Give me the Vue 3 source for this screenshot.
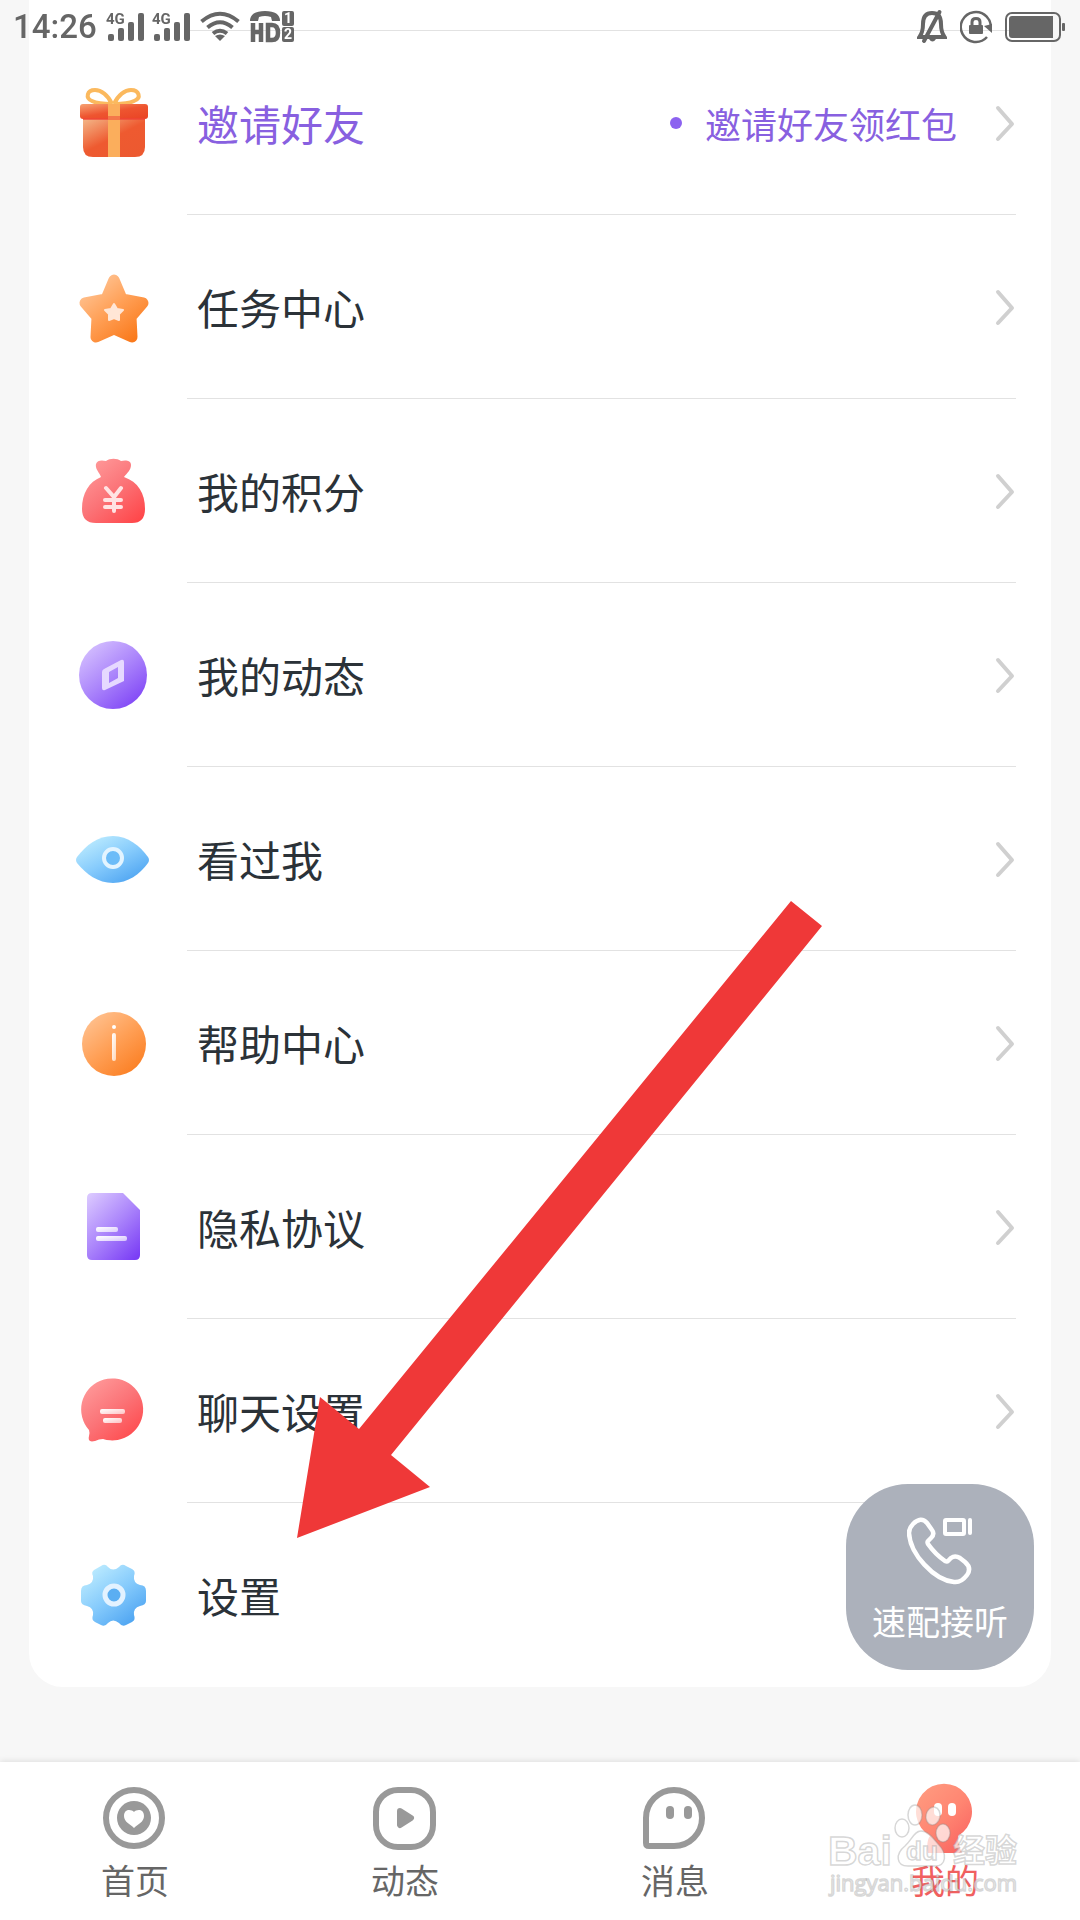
<template>
  <div class="page">
    <svg class="defs" width="0" height="0" aria-hidden="true">
      <defs>
        <linearGradient v-for="g in gradients" :id="g.id" :key="g.id" x1="0.1" y1="0" x2="0.9" y2="1">
          <stop offset="0" :stop-color="g.from" />
          <stop offset="0.5" :stop-color="g.mid" />
          <stop offset="1" :stop-color="g.to" />
        </linearGradient>
        <linearGradient id="shine" x1="0" y1="0" x2="1" y2="1">
          <stop offset="0" stop-color="#fff" />
          <stop offset="1" stop-color="#fff" stop-opacity="0.6" />
        </linearGradient>
      </defs>
    </svg>

    <header class="status">
      <div class="status-group">
        <span class="time">14:26</span>
        <svg v-for="n in 2" :key="n" class="signal" width="38" height="54" viewBox="0 0 38 54">
          <text class="net" x="0" y="24">4G</text>
          <rect x="2" y="34" width="6" height="7" rx="2" />
          <rect x="12" y="28" width="6" height="13" rx="2" />
          <rect x="22" y="22" width="6" height="19" rx="2" />
          <rect x="32" y="13" width="6" height="28" rx="2" />
        </svg>
        <svg class="wifi" width="40" height="54" viewBox="0 0 40 54">
          <g fill="none" stroke="#666" stroke-width="4">
            <path d="M1.5 21.5 Q20 6 38.5 21.5" />
            <path d="M7.5 27.5 Q20 17 32.5 27.5" />
            <path d="M13 33.5 Q20 28 27 33.5" />
          </g>
          <path d="M20 41 L15 36 Q20 33 25 36 Z" />
        </svg>
        <svg class="hd" width="44" height="54" viewBox="0 0 44 54">
          <path d="M0 21 Q0 11 15 11 Q30 11 30 21 L22 21 L21 17 Q15 15 9 17 L8 21 Z" />
          <path d="M3 23 V42 M11 23 V42 M3 32 H11" fill="none" stroke="#666" stroke-width="4.5" />
          <path d="M18 25 V40 H22 Q28 40 28 33 Q28 25 22 25 Z" fill="none" stroke="#666" stroke-width="4.5" />
          <rect x="32" y="11" width="12" height="15" rx="2" />
          <rect x="32" y="27" width="12" height="15" rx="2" />
          <text class="sim" x="38" y="23" text-anchor="middle">1</text>
          <text class="sim" x="38" y="39" text-anchor="middle">2</text>
        </svg>
      </div>
      <div class="status-group status-right">
        <svg width="30" height="54" viewBox="0 0 30 54">
          <path d="M2.5 37 Q6 32 6 24 Q6 13 15 13 Q24 13 24 24 Q24 32 27.5 37 Z" fill="none" stroke="#666" stroke-width="4" />
          <path d="M7 41 L22.500 12" stroke="#666" stroke-width="4" stroke-linecap="round" />
          <path d="M12 39 H19 Q15.5 44 12 39 Z" />
        </svg>
        <svg width="32" height="54" viewBox="0 0 32 54">
          <path d="M27 37 A15 15 0 1 1 30.5 30" fill="none" stroke="#666" stroke-width="2.5" />
          <path d="M24 26 L32 24 L32 33 Z" />
          <rect x="9" y="25" width="14" height="9" rx="1" />
          <path d="M12 26 V22 Q12 18.500 16 18.5 Q20 18.5 20 22 V26" fill="none" stroke="#666" stroke-width="3" />
        </svg>
        <svg width="60" height="54" viewBox="0 0 60 54">
          <rect x="1" y="13" width="54" height="28" rx="6" fill="none" stroke="#666" stroke-width="2" />
          <path d="M7 16 H48 V38 H7 Q4 38 4 35 V19 Q4 16 7 16 Z" />
          <rect x="57" y="23" width="3" height="8" rx="1" />
        </svg>
      </div>
    </header>

    <main class="content">
      <ul class="card">
        <li v-for="item in items" :key="item.label">
          <a class="row" href="#" :class="{ accent: item.hint }">
            <svg class="icon" width="72" height="72" viewBox="0 0 72 72" aria-hidden="true">
              <template v-if="item.icon === 'gift'">
                <g fill="none" stroke="#fbb95e" stroke-width="4">
                  <path d="M34 17 C30 8 23 3 17 3 C9 3 7 11 14 14 C20 17 28 17 34 17" />
                  <path d="M36 17 C40 8 47 3 53 3 C61 3 64 11 56 14 C50 17 42 17 36 17" />
                </g>
                <path d="M5 31 H67 V60 Q67 70 57 70 H15 Q5 70 5 60 Z" fill="url(#giftBox)" />
                <rect x="2" y="17" width="68" height="15" rx="3" fill="url(#giftLid)" />
                <rect x="5" y="31" width="62" height="2" fill="#f04438" opacity="0.7" />
                <rect x="30" y="17" width="12" height="53" fill="#fbae5c" />
                <rect x="30" y="29" width="12" height="4" fill="#f4774a" />
              </template>
              <template v-else-if="item.icon === 'star'">
                <path
                  d="M36 9 L44 28 L65 32 L53 46 L54 66 L36 58 L18 66 L19 46 L7 32 L28 28 Z"
                  fill="url(#orange)" stroke="url(#orange)" stroke-width="11" stroke-linejoin="round"
                />
                <path
                  d="M36 33 L39 38 L45 39 L41 43 L41 49 L36 47 L31 49 L31 43 L27 39 L33 38 Z"
                  fill="#ffe6d6" stroke="#ffe6d6" stroke-width="2" stroke-linejoin="round"
                />
              </template>
              <template v-else-if="item.icon === 'bag'">
                <path
                  d="M23 22 C21 17 17 14 18 9 C19 5 24 5 28 6 C32 3 39 3 43 6 C47 5 53 5 53 10 C53 15 49 18 46 22 C60 27 67 38 67 54 Q67 68 54 68 H18 Q4 68 4 54 C4 38 11 27 23 22 Z"
                  fill="url(#red)"
                />
                <path
                  d="M28 33 L36 42 L43 33 M36 42 V56 M27 45 H43 M27 52 H43"
                  fill="none" stroke="#ffe3e3" stroke-width="4" stroke-linecap="round"
                />
              </template>
              <template v-else-if="item.icon === 'compass'">
                <circle cx="35" cy="36" r="34" fill="url(#purple)" />
                <path
                  d="M26 30 L43 21 Q46 20 46 23 V42 L27 51 Q24 52 24 49 V33 Q24 31 26 30 Z M31 33 V44 L40 39 V28 Z"
                  fill="#e6d9ff" fill-rule="evenodd"
                />
              </template>
              <template v-else-if="item.icon === 'eye'">
                <path
                  d="M-1 34 C8 22 20 13 35 13 C50 13 62 23 70 34 Q72 37 70 40 C62 51 50 60 35 60 C20 60 8 51 -1 40 Q-3 37 -1 34 Z"
                  fill="url(#blue)"
                />
                <circle cx="35" cy="35" r="9" fill="#6cbcf8" stroke="#e3f4ff" stroke-width="4" />
              </template>
              <template v-else-if="item.icon === 'info'">
                <circle cx="36" cy="37" r="32" fill="url(#orange)" />
                <circle cx="36" cy="20" r="2" fill="#fff" />
                <rect x="34" y="26" width="4" height="28" rx="2" fill="url(#shine)" />
              </template>
              <template v-else-if="item.icon === 'doc'">
                <path d="M14 2 H45 L62 19 V64 Q62 69 57 69 H14 Q9 69 9 64 V7 Q9 2 14 2 Z" fill="url(#purple)" />
                <rect x="18" y="36" width="22" height="5" rx="2" fill="url(#shine)" />
                <rect x="18" y="45" width="31" height="5" rx="2" fill="url(#shine)" />
              </template>
              <template v-else-if="item.icon === 'chat'">
                <path
                  d="M11 55 A31 31 0 1 1 25 64 Q21 64 17 66 Q9 68 11 61 Q12 58 11 55 Z"
                  fill="url(#red)"
                />
                <rect x="22" y="34" width="25" height="5" rx="2" fill="url(#shine)" />
                <rect x="25" y="43" width="19" height="5" rx="2" fill="url(#shine)" />
              </template>
              <template v-else>
                <path
                  d="M16 11 L23 7 Q27 4 30 8 Q35 13 41 8 Q44 4 48 7 L54 10 Q58 12 56 17 Q55 24 62 26 Q68 26 68 32 V42 Q68 46 62 47 Q55 49 56 56 Q58 61 54 63 L48 66 Q44 68 41 64 Q35 59 30 64 Q27 68 23 66 L17 63 Q13 61 15 56 Q16 49 9 47 Q3 46 3 42 V32 Q3 26 9 26 Q16 24 15 17 Q13 13 16 11 Z"
                  fill="url(#blue)"
                />
                <circle cx="36" cy="36" r="9" fill="#5baef2" stroke="#e3f2ff" stroke-width="5" />
              </template>
            </svg>
            <span class="body">
              <span class="label">{{ item.label }}</span>
              <span v-if="item.hint" class="hint">{{ item.hint }}</span>
              <svg class="chevron" width="24" height="40" viewBox="0 0 24 40" aria-hidden="true">
                <path d="M6 5 L20 21 L6 36" />
              </svg>
            </span>
          </a>
        </li>
      </ul>

      <svg class="arrow" width="525" height="637" viewBox="0 0 525 637" aria-hidden="true">
        <path d="M494 0 L525 25 L94 554 L133 586 L0 637 L23 496 L62 528 Z" fill="#ef3838" />
      </svg>
    </main>

    <button class="call" type="button">
      <svg width="66" height="68" viewBox="0 0 66 68" fill="none" stroke="#fff" aria-hidden="true">
        <path
          d="M6 7 Q14 -1 20 6 L25 13 Q28 17 24 21 L21 24 Q20 25 21 27 Q28 37 38 44 Q40 45 41 44 L44 41 Q48 38 53 41 L58 45 Q65 51 60 58 Q54 66 47 65 C27 63 3 37 2 16 Q2 11 6 7 Z"
          stroke-width="4.5"
        />
        <rect x="38" y="3" width="19" height="14" rx="1" stroke-width="4" />
        <path d="M63 3 V16" stroke-width="4" stroke-linecap="round" />
      </svg>
      <span>速配接听</span>
    </button>

    <nav class="tabs">
      <a v-for="tab in tabs" :key="tab.label" class="tab" :class="{ active: tab.active }" href="#">
        <svg width="70" height="72" viewBox="0 0 70 72" aria-hidden="true">
          <template v-if="tab.icon === 'home'">
            <circle cx="34" cy="37" r="28" fill="none" stroke="#999" stroke-width="6" />
            <circle cx="34" cy="37" r="17" fill="#999" />
            <path d="M34 31 C31 28 24 28 24 35 C24 41 30 43 34 47 C38 43 44 41 44 35 C44 28 37 28 34 31 Z" fill="#fff" />
          </template>
          <template v-else-if="tab.icon === 'feed'">
            <rect x="6" y="9" width="57" height="57" rx="22" fill="none" stroke="#999" stroke-width="6" />
            <path d="M30 30 L41 37 L30 44 Z" fill="#999" stroke="#999" stroke-width="6" stroke-linejoin="round" />
          </template>
          <template v-else-if="tab.icon === 'message'">
            <path d="M34 9 A28 28 0 0 1 34 65 H9 Q6 65 6 62 V37 A28 28 0 0 1 34 9 Z" fill="none" stroke="#999" stroke-width="6" />
            <rect x="26" y="25" width="8" height="13" rx="4" fill="#999" />
            <rect x="44" y="25" width="8" height="13" rx="4" fill="#999" />
          </template>
          <template v-else>
            <path d="M18 72 Q16 60 20 55 A28 28 0 1 1 48 55 Q48 63 52 72 Z" fill="url(#mine)" />
            <rect x="24" y="22" width="8" height="13" rx="4" fill="#fff" />
            <rect x="38" y="22" width="8" height="13" rx="4" fill="#fff" />
          </template>
        </svg>
        <span>{{ tab.label }}</span>
      </a>

      <svg class="watermark" width="200" height="104" viewBox="0 0 200 104" aria-hidden="true">
        <g class="mark">
          <ellipse cx="76" cy="28" rx="7" ry="9" />
          <ellipse cx="89" cy="15" rx="7" ry="10" />
          <ellipse cx="107" cy="16" rx="7" ry="9" transform="rotate(12 107 16)" />
          <ellipse cx="117" cy="33" rx="7" ry="9" />
          <path d="M95 31 C102 31 107 38 112 44 C122 54 120 66 109 66 H82 C70 66 69 54 79 46 C86 40 88 31 95 31 Z" />
          <text class="bai" x="2" y="65">Bai</text>
          <text class="du" x="80" y="60">du</text>
          <text class="jy" x="127" y="62">经验</text>
          <text class="url" x="4" y="91">jingyan.baidu.com</text>
        </g>
      </svg>
    </nav>
  </div>
</template>

<script setup>
const items = [
  { icon: 'gift', label: '邀请好友', hint: '邀请好友领红包' },
  { icon: 'star', label: '任务中心' },
  { icon: 'bag', label: '我的积分' },
  { icon: 'compass', label: '我的动态' },
  { icon: 'eye', label: '看过我' },
  { icon: 'info', label: '帮助中心' },
  { icon: 'doc', label: '隐私协议' },
  { icon: 'chat', label: '聊天设置' },
  { icon: 'gear', label: '设置' },
]

const tabs = [
  { icon: 'home', label: '首页' },
  { icon: 'feed', label: '动态' },
  { icon: 'message', label: '消息' },
  { icon: 'mine', label: '我的', active: true },
]

const gradients = [
  { id: 'orange', from: '#ffc596', mid: '#ff9f55', to: '#fa7a1c' },
  { id: 'red', from: '#ff9d9d', mid: '#fb7478', to: '#ff4548' },
  { id: 'purple', from: '#d9c6ff', mid: '#ab85fb', to: '#7a3df5' },
  { id: 'blue', from: '#c4f0ff', mid: '#86cbfc', to: '#459ef0' },
  { id: 'giftBox', from: '#f3b183', mid: '#ee5a30', to: '#ec5930' },
  { id: 'giftLid', from: '#f69b6c', mid: '#ee5530', to: '#ea4425' },
  { id: 'mine', from: '#ff9b80', mid: '#ff8672', to: '#f9605f' },
]
</script>

<style>
body {
  margin: 0;
  background: #f7f7f7;
}
</style>

<style scoped>
.page {
  display: flex;
  flex-direction: column;
  min-height: 100vh;
  font-family: "Noto Sans CJK SC", sans-serif;
  background: #f7f7f7;
}

.defs {
  position: absolute;
}

/* A barra de status fica por cima da lista rolada */
.status {
  position: fixed;
  top: 0;
  left: 0;
  right: 0;
  z-index: 5;
  display: flex;
  justify-content: space-between;
  padding: 0 15px 0 13px;
  height: 54px;
  color: #666;
  fill: #666;
}

.status-group {
  display: flex;
  align-items: center;
  gap: 8px;
}

.status-right {
  gap: 13px;
}

.time {
  min-width: 85px;
  font-family: Roboto, sans-serif;
  font-size: 33px;
  line-height: 56px;
  font-weight: 500;
}

.wifi {
  margin: 0 2px;
}

.net {
  font: bold 15px Roboto, sans-serif;
}

.sim {
  font: bold 14px Roboto, sans-serif;
  fill: #fff;
}

.content {
  position: relative;
  flex: 1;
}

.card {
  margin: 0 29px 75px;
  padding: 30px 0 1px;
  list-style: none;
  background: #fff;
  border-radius: 0 0 34px 34px;
}

.row {
  display: flex;
  align-items: center;
  gap: 37px;
  padding: 0 35px 0 49px;
  color: #2b3238;
  text-decoration: none;
}

.icon {
  flex: none;
  margin-top: 2px;
  overflow: visible;
}

.body {
  display: flex;
  flex: 1;
  align-items: center;
  box-sizing: border-box;
  height: 184px;
  padding-left: 10px;
  border-top: 1px solid #e2e2e2;
}

.label {
  flex: 1;
  font-size: 42px;
  line-height: 60px;
}

.hint {
  display: flex;
  align-items: center;
  gap: 23px;
  margin-right: 35px;
  font-size: 36px;
  line-height: 52px;
}

.hint::before {
  content: "";
  width: 12px;
  height: 12px;
  border-radius: 50%;
  background: #8c62f0;
}

.accent {
  color: #8860e0;
}

.chevron {
  fill: none;
  stroke: #d0d0d0;
  stroke-width: 4;
  stroke-linecap: round;
  stroke-linejoin: round;
}

.arrow {
  position: absolute;
  top: 901px;
  left: 297px;
  pointer-events: none;
}

.call {
  position: fixed;
  right: 46px;
  bottom: 250px;
  display: flex;
  flex-direction: column;
  align-items: center;
  justify-content: center;
  gap: 12px;
  box-sizing: border-box;
  width: 188px;
  height: 186px;
  padding: 8px 0 0;
  border: 0;
  border-radius: 62px;
  background: #acb1bb;
  color: #fff;
  font-family: inherit;
  font-size: 34px;
  line-height: 48px;
}

.tabs {
  position: sticky;
  bottom: 0;
  display: flex;
  background: #fff;
  box-shadow: 0 -1px 6px rgba(0, 0, 0, 0.1);
}

.tab {
  display: flex;
  flex: 1;
  flex-direction: column;
  align-items: center;
  gap: 3px;
  padding: 19px 0 16px;
  color: #666;
  font-size: 34px;
  line-height: 48px;
  text-decoration: none;
}

.active {
  color: #f0605f;
}

.watermark {
  position: absolute;
  right: 54px;
  bottom: 16px;
  pointer-events: none;
}

.mark {
  fill: rgba(255, 255, 255, 0.7);
  stroke: rgba(140, 140, 140, 0.35);
  stroke-width: 1.5;
}

.bai {
  font: bold 41px "Liberation Sans", sans-serif;
}

.du {
  font: bold 26px "Liberation Sans", sans-serif;
}

.jy {
  font: bold 32px "Noto Sans CJK SC", sans-serif;
}

.url {
  font: 22px "Open Sans", sans-serif;
}
</style>
